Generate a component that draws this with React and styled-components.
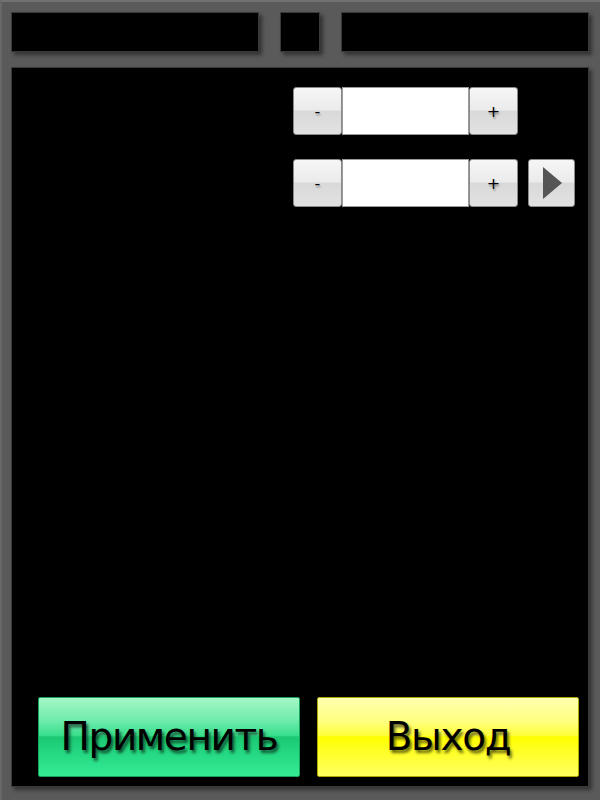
import React from "react";
import styled, { createGlobalStyle } from "styled-components";

const Global = createGlobalStyle`
  html, body { margin: 0; padding: 0; background: #5a5a5a; }
  body { font-family: "DejaVu Sans", Verdana, sans-serif; }
`;

const Frame = styled.div`
  box-sizing: border-box;
  width: 600px;
  height: 800px;
  background: #5a5a5a;
  border-top: 2px solid #727272;
  border-left: 2px solid #686868;
  padding: 10px 11px 13px 9px;
  display: flex;
  flex-direction: column;
  gap: 15px;
`;

const TopBar = styled.div`
  display: flex;
  gap: 21px;
  height: 40px;
`;

const Slot = styled.div`
  box-sizing: border-box;
  width: ${(p) => p.$w}px;
  height: 40px;
  background: #000;
  border: 1px solid #3a3a3a;
  box-shadow: 3px 3px 4px rgba(0, 0, 0, 0.45);
`;

const Panel = styled.div`
  flex: 1;
  box-sizing: border-box;
  background: #000;
  border: 1px solid #3a3a3a;
  box-shadow: 3px 3px 4px rgba(0, 0, 0, 0.45);
  display: flex;
  flex-direction: column;
  justify-content: space-between;
  padding: 19px 9px 9px 26px;
`;

const Controls = styled.div`
  display: flex;
  flex-direction: column;
  gap: 24px;
  padding-left: 255px;
`;

const Row = styled.div`
  display: flex;
  align-items: center;
`;

const GreyButton = styled.div`
  box-sizing: border-box;
  width: ${(p) => p.$w || 49}px;
  height: 48px;
  border: 1px solid #8a8a8a;
  border-radius: 3px;
  background: linear-gradient(
    to bottom,
    #f6f6f6 0%,
    #ebebeb 48%,
    #d9d9d9 50%,
    #e2e2e2 100%
  );
  display: flex;
  align-items: center;
  justify-content: center;
  font-family: "DejaVu Sans", sans-serif;
  font-size: 16px;
  color: #000;
  text-shadow: 1px 2px 2px rgba(0, 0, 0, 0.35);
  margin-left: ${(p) => p.$ml || 0}px;
`;

const Field = styled.div`
  box-sizing: border-box;
  width: 127px;
  height: 48px;
  background: #fff;
  border: 1px solid #9a9a9a;
`;

const Arrow = styled.svg`
  width: 19px;
  height: 32px;
  margin-left: 2px;
`;

const Actions = styled.div`
  display: flex;
  gap: 17px;
`;

const Action = styled.div`
  box-sizing: border-box;
  width: 263px;
  height: 80px;
  border-radius: 2px;
  border: 1px solid ${(p) => p.$border};
  background: ${(p) => p.$bg};
  display: flex;
  align-items: center;
  justify-content: center;
  font-family: "DejaVu Sans", Verdana, sans-serif;
  font-size: 39px;
  letter-spacing: -1.4px;
  color: #000;
  text-shadow: 2px 3px 3px rgba(0, 0, 0, 0.6);
  padding-bottom: 2px;
`;

const greenBg = `linear-gradient(to bottom, #a4f7c6 0%, #6cebaa 30%, #38de8c 48%, #1cc872 50%, #22d47e 65%, #34ec94 100%)`;
const yellowBg = `linear-gradient(to bottom, #ffffb0 0%, #ffff80 30%, #ffff3a 48%, #ffff00 50%, #ffff20 65%, #ffff60 100%)`;

export default function App() {
  return (
    <>
      <Global />
      <Frame>
        <TopBar>
          <Slot $w={248} />
          <Slot $w={40} />
          <Slot $w={248} />
        </TopBar>
        <Panel>
          <Controls>
            <Row>
              <GreyButton>-</GreyButton>
              <Field />
              <GreyButton>+</GreyButton>
            </Row>
            <Row>
              <GreyButton>-</GreyButton>
              <Field />
              <GreyButton>+</GreyButton>
              <GreyButton $w={47} $ml={10}>
                <Arrow viewBox="0 0 19 32">
                  <polygon points="0,0 19,16 0,32" fill="#555" />
                </Arrow>
              </GreyButton>
            </Row>
          </Controls>
          <Actions>
            <Action $bg={greenBg} $border="#17a45c">Применить</Action>
            <Action $bg={yellowBg} $border="#b0a800">Выход</Action>
          </Actions>
        </Panel>
      </Frame>
    </>
  );
}
